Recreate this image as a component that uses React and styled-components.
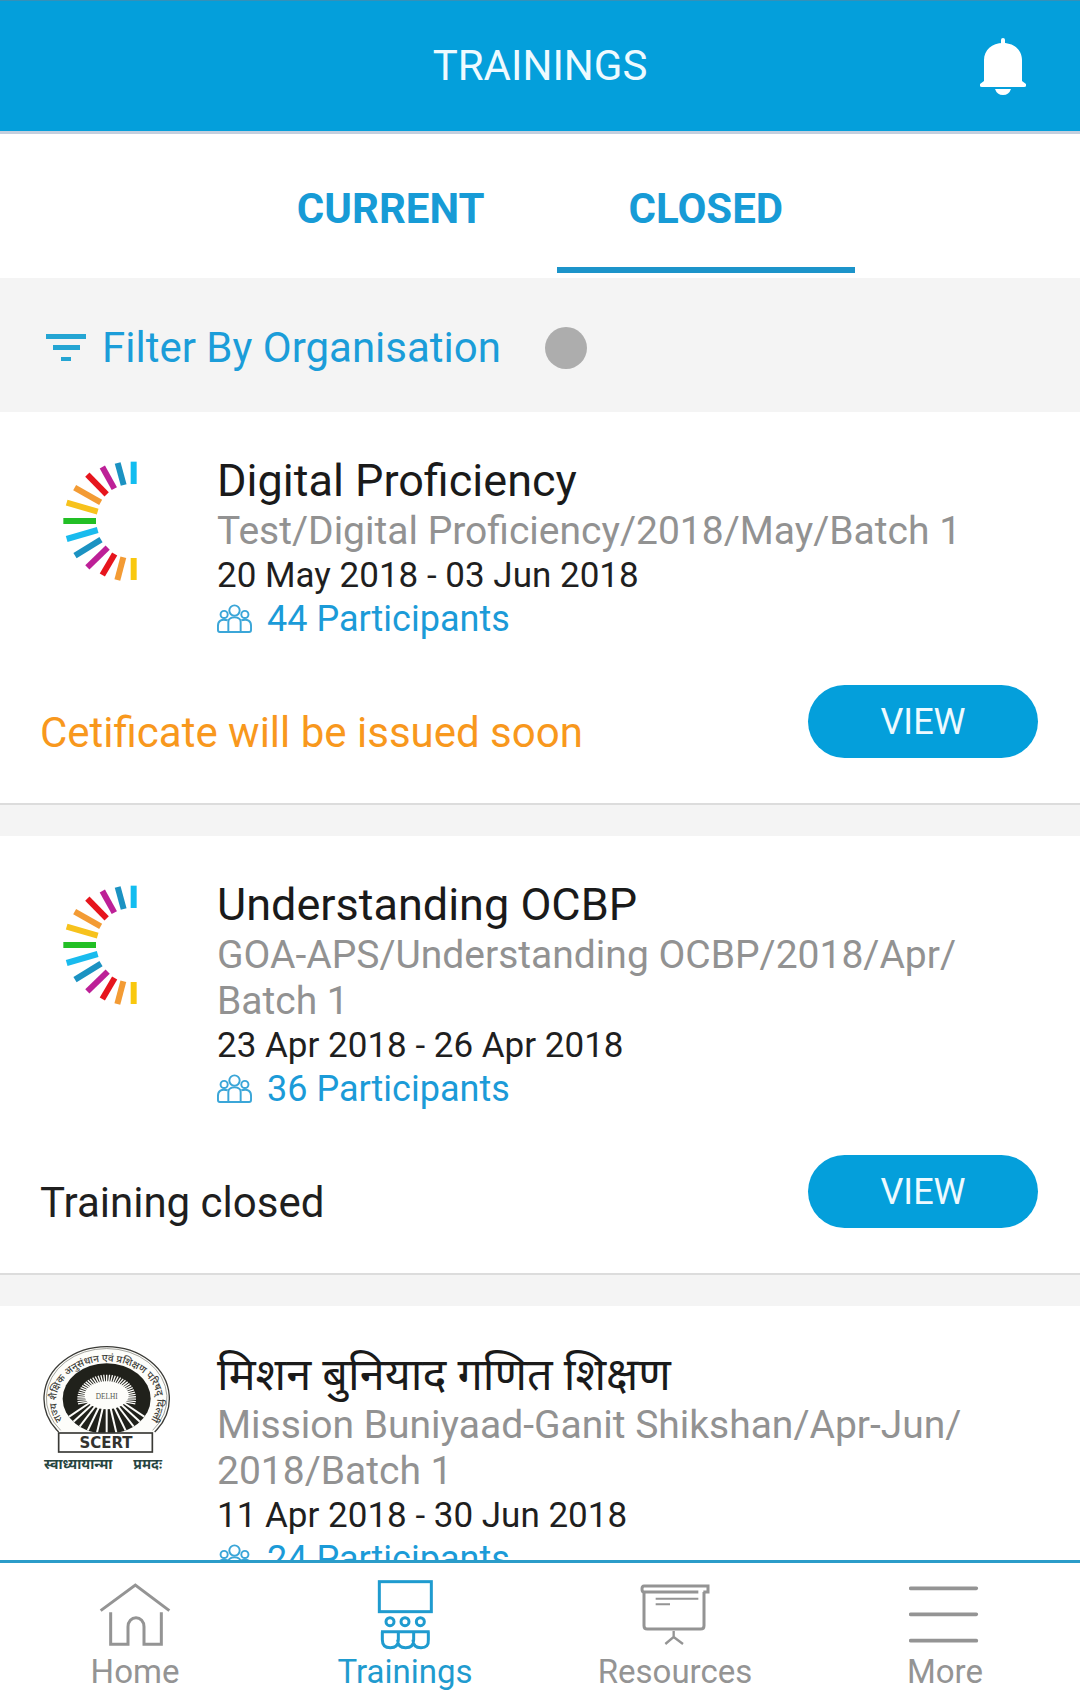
import React, { useState } from 'react'
import styled, { createGlobalStyle } from 'styled-components'

const GlobalStyle = createGlobalStyle`
* { box-sizing: border-box; }
body {
  margin: 0;
  background: #ffffff;
  font-family: Roboto, "Noto Sans", sans-serif;
}
button { font-family: inherit; border: none; cursor: pointer; }
`

const Page = styled.div`
display: flex;
flex-direction: column;
height: 100vh;
`

const Header = styled.header`
display: grid;
grid-template-columns: 1fr auto 1fr;
align-items: center;
height: 134px;
padding: 0 54px;
background: #049fdb;
border-top: 1px solid #3590b8;
border-bottom: 3px solid #c4cfde;
`

const HeaderTitle = styled.h1`
grid-column: 2;
margin: 0;
color: #eefaff;
font-size: 42px;
line-height: 50px;
font-weight: 400;
`

const BellButton = styled.button`
display: flex;
justify-self: end;
padding: 0;
background: none;
`

const Tabs = styled.div`
display: flex;
justify-content: center;
padding-bottom: 5px;
`

const Tab = styled.button`
padding: 50px 72px 33px;
background: none;
border-bottom: 6px solid ${props => props.$active ? "#1c94ca" : "transparent"};
color: #179bd6;
font-size: 42px;
line-height: 50px;
font-weight: 700;
`

const FilterBar = styled.div`
display: flex;
align-items: center;
gap: 44px;
height: 134px;
padding: 6px 46px 0;
background: #f4f4f4;
`

const FilterButton = styled.button`
display: flex;
align-items: center;
gap: 16px;
padding: 0;
background: none;
color: #1b9dd9;
font-size: 42px;
line-height: 50px;
`

const Dot = styled.span`
width: 42px;
height: 42px;
border-radius: 50%;
background: #adadad;
`

const List = styled.main`
flex: 1;
min-height: 0;
overflow-y: auto;
scrollbar-width: none;
background: #f4f4f4;
`

const Card = styled.article`
padding: 42px 42px 45px 40px;
margin-bottom: 31px;
background: #ffffff;
border-bottom: 2px solid #dcdcdc;
`

const CardTop = styled.div`
display: flex;
gap: 47px;
`

const Logo = styled.svg`
flex: none;
width: 130px;
height: 130px;
overflow: visible;
`

const Info = styled.div`
flex: 1;
min-width: 0;
padding-right: 44px;
`

const Name = styled.h2`
margin: 0;
color: #1a1a1a;
font-size: 45px;
line-height: 54px;
font-weight: 400;
`

const Batch = styled.p`
margin: 0;
color: #929292;
font-size: 39px;
line-height: 46px;
`

const Dates = styled.p`
margin: 0;
color: #1f1f1f;
font-size: 35px;
line-height: 44px;
`

const Participants = styled.a`
display: flex;
align-items: center;
gap: 15px;
color: #1b9bd8;
font-size: 36px;
line-height: 42px;
text-decoration: none;
`

const CardBottom = styled.div`
display: flex;
align-items: flex-end;
justify-content: space-between;
margin-top: 45px;
`

const Status = styled.p`
margin: 0;
color: ${props => props.$pending ? "#f8981d" : "#1f1f1f"};
font-size: 42px;
line-height: 50px;
`

const ViewButton = styled.button`
width: 230px;
height: 73px;
padding: 0;
border-radius: 37px;
background: #049fdb;
color: #eefaff;
font-size: 36px;
`

const BottomNav = styled.nav`
display: grid;
grid-template-columns: repeat(4, 1fr);
padding: 16px 0 11px;
background: #ffffff;
border-top: 3px solid #2b9cc9;
`

const NavLink = styled.a`
display: flex;
flex-direction: column;
align-items: center;
color: ${props => props.$active ? "#1f9bcf" : "#949494"};
font-size: 33px;
line-height: 42px;
text-decoration: none;
`

const NavIcon = styled.svg`
width: 72px;
height: 72px;
fill: none;
stroke: currentColor;
stroke-width: 9;
`

const BellIcon = () => (
  <svg width="46" height="57" viewBox="0 0 46 57" fill="#ffffff">
    <rect x="21" y="0" width="4" height="8" rx="2" />
    <path d="M4 43V22C4 12 12 5 23 5s19 7 19 17v21l4 3v2q0 1-2 1H2q-2 0-2-1v-2z" />
    <path d="M15 51h16q-2 6-8 6t-8-6z" />
  </svg>
)

const FilterIcon = () => (
  <svg width="40" height="28" viewBox="0 0 40 28" fill="#24a5d3">
    <rect x="0" y="0" width="40" height="5" />
    <rect x="7" y="11" width="27" height="5" />
    <rect x="15" y="23" width="10" height="4" />
  </svg>
)

const PeopleIcon = () => (
  <svg width="35" height="30" viewBox="0 0 108 90" fill="none" stroke="#3ba6d8" strokeWidth="6">
    <circle cx="54" cy="19" r="16" />
    <circle cx="22" cy="31" r="11" />
    <circle cx="86" cy="31" r="11" />
    <path d="M35 85V54q0-14 19-14t19 14v31" />
    <path d="M33 49Q3 42 3 66v13q0 6 6 6h90q6 0 6-6V66q0-24-30-17" />
  </svg>
)

const rays = [
  ["#12bdf0", 311, 65, 311, 132],
  ["#1b92c2", 263, 69, 281, 135],
  ["#bd2097", 217, 81, 253, 146],
  ["#e6151d", 172, 104, 230, 163],
  ["#f39b34", 134, 143, 212, 187],
  ["#f7c21c", 110, 188, 203, 215],
  ["#22bf25", 100, 243, 198, 243],
  ["#19bbee", 110, 297, 203, 270],
  ["#1b92c2", 135, 347, 213, 299],
  ["#bd2097", 172, 382, 233, 323],
  ["#e6151d", 217, 405, 254, 342],
  ["#f39b34", 262, 420, 280, 352],
  ["#f9c80e", 311, 354, 311, 420],
]

const RayLogo = () => (
  <Logo viewBox="30 42 390 390">
    {rays.map(([color, x1, y1, x2, y2]) => (
      <line key={`${x1}-${y1}`} x1={x1} y1={y1} x2={x2} y2={y2} stroke={color} strokeWidth="18" />
    ))}
  </Logo>
)

// short spikes round the sun, long beams below it
const spikes = Array.from({ length: 37 }, (_, i) => Math.PI * (0.93 + i * 1.14 / 36))
const beams = [-190, -140, -98, -62, -30, 0, 30, 62, 98, 140, 190]

const ScertLogo = () => (
  <Logo viewBox="30 54 390 390">
    <defs>
      <path id="scert-arc" d="M112 286A151 118 0 1 1 348 286" />
      <clipPath id="scert-disc">
        <ellipse cx="230" cy="206" rx="132" ry="106" />
      </clipPath>
    </defs>
    <path d="M86 306A188 156 0 1 1 374 306" fill="#fdfdfa" stroke="#3a3a36" strokeWidth="4" />
    <path d="M92 301A181 149 0 1 1 368 301" fill="none" stroke="#77776f" strokeWidth="2" />
    <ellipse cx="230" cy="206" rx="132" ry="106" fill="#20211b" />
    <g clipPath="url(#scert-disc)" stroke="#fdfdfa">
      {spikes.map(a => (
        <line
          key={a}
          x1="230"
          y1="206"
          x2={230 + 88 * Math.cos(a)}
          y2={206 + 72 * Math.sin(a)}
          strokeWidth="4"
        />
      ))}
      {beams.map(x => (
        <line key={x} x1={230 + x / 4} y1="216" x2={230 + x} y2="312" strokeWidth="6" />
      ))}
    </g>
    <ellipse cx="230" cy="196" rx="66" ry="42" fill="#fdfdfa" />
    <text x="230" y="207" textAnchor="middle" fontSize="22" fontFamily="Liberation Serif, serif" fill="#55554e">DELHI</text>
    <text fontSize="30" fontWeight="500" fill="#3c3c37">
      <textPath href="#scert-arc" startOffset="50%" textAnchor="middle">राज्य शैक्षिक अनुसंधान एवं प्रशिक्षण परिषद् दिल्ली</textPath>
    </text>
    <rect x="86" y="309" width="281" height="57" fill="#ffffff" stroke="#3a3a36" strokeWidth="5" />
    <text x="228" y="354" textAnchor="middle" fontSize="45" fontWeight="700" fontFamily="DejaVu Sans, sans-serif" fill="#33332f">SCERT</text>
    <text x="42" y="418" fontSize="42" fontWeight="700" fill="#27453f">स्वाध्यायान्मा</text>
    <text x="310" y="418" fontSize="42" fontWeight="700" fill="#27453f">प्रमदः</text>
  </Logo>
)

const HomeIcon = () => (
  <NavIcon viewBox="0 0 216 216">
    <path d="M5 95L109 18l102 77" />
    <path d="M35 100v96h52v-53a24 27 0 0 1 48 0v53h52v-96" />
  </NavIcon>
)

const TrainingsIcon = () => (
  <NavIcon viewBox="0 0 216 216">
    <rect x="31" y="8" width="156" height="90" />
    <circle cx="63" cy="128" r="12" />
    <circle cx="108" cy="128" r="12" />
    <circle cx="154" cy="128" r="12" />
    <path d="M36 158h146M40 158v24q0 24 24 24t24-24v-24M86 182q0 24 24 24t24-24v-24M132 182q0 24 24 24t22-24v-24" />
  </NavIcon>
)

const ResourcesIcon = () => (
  <NavIcon viewBox="0 0 216 216">
    <path d="M178 39H15q-6 0-6-9t6-9h192v18h-14" />
    <path d="M15 42v98q0 10 10 10h160q10 0 10-10V39" />
    <path d="M50 59h128M50 76h43" strokeWidth="6" />
    <path d="M104 156v18l-25 21M104 174l28 21" strokeWidth="7" />
  </NavIcon>
)

const MoreIcon = () => (
  <NavIcon viewBox="0 0 216 216">
    <path d="M5 28h197M5 106h197M5 185h197" strokeWidth="11" strokeLinecap="round" />
  </NavIcon>
)

const trainings = [
  {
    id: 1,
    logo: RayLogo,
    name: "Digital Proficiency",
    batch: "Test/Digital Proficiency/2018/May/Batch 1",
    dates: "20 May 2018 - 03 Jun 2018",
    participants: 44,
    status: "Cetificate will be issued soon",
    pending: true,
  },
  {
    id: 2,
    logo: RayLogo,
    name: "Understanding OCBP",
    batch: "GOA-APS/Understanding OCBP/2018/Apr/\u200bBatch 1",
    dates: "23 Apr 2018 - 26 Apr 2018",
    participants: 36,
    status: "Training closed",
  },
  {
    id: 3,
    logo: ScertLogo,
    name: "मिशन बुनियाद गणित शिक्षण",
    batch: "Mission Buniyaad-Ganit Shikshan/Apr-Jun/\u200b2018/Batch 1",
    dates: "11 Apr 2018 - 30 Jun 2018",
    participants: 24,
    status: "Training closed",
  },
]

const navItems = [
  { label: "Home", icon: HomeIcon },
  { label: "Trainings", icon: TrainingsIcon },
  { label: "Resources", icon: ResourcesIcon },
  { label: "More", icon: MoreIcon },
]

const Training = ({ item }) => {
  const ItemLogo = item.logo;
  return (
    <Card>
      <CardTop>
        <ItemLogo />
        <Info>
          <Name>{item.name}</Name>
          <Batch>{item.batch}</Batch>
          <Dates>{item.dates}</Dates>
          <Participants href="#participants">
            <PeopleIcon />
            {item.participants} Participants
          </Participants>
        </Info>
      </CardTop>
      <CardBottom>
        <Status $pending={item.pending}>{item.status}</Status>
        <ViewButton>VIEW</ViewButton>
      </CardBottom>
    </Card>
  )
}

const App = () => {
  const [tab, setTab] = useState("CLOSED");

  return (
    <Page>
      <GlobalStyle />
      <Header>
        <HeaderTitle>TRAININGS</HeaderTitle>
        <BellButton aria-label="Notifications"><BellIcon /></BellButton>
      </Header>
      <Tabs role="tablist">
        {["CURRENT", "CLOSED"].map(name => (
          <Tab key={name} role="tab" aria-selected={tab === name} $active={tab === name} onClick={() => setTab(name)}>
            {name}
          </Tab>
        ))}
      </Tabs>
      <FilterBar>
        <FilterButton><FilterIcon />Filter By Organisation</FilterButton>
        <Dot />
      </FilterBar>
      <List>
        {trainings.map(item => <Training key={item.id} item={item} />)}
      </List>
      <BottomNav>
        {navItems.map(({ label, icon: Icon }) => (
          <NavLink key={label} href={`#${label.toLowerCase()}`} $active={label === "Trainings"}>
            <Icon />
            {label}
          </NavLink>
        ))}
      </BottomNav>
    </Page>
  )
};

export default App;
